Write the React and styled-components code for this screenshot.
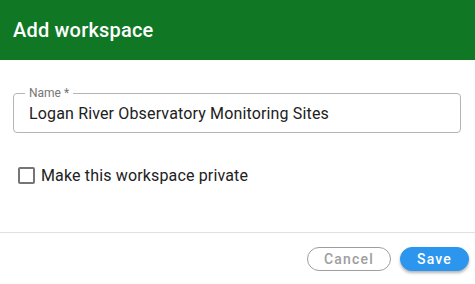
import React from 'react';
import styled, { createGlobalStyle } from 'styled-components';

const GlobalStyle = createGlobalStyle`
	body {
		margin: 0;
		background: #fff;
		font-family: Roboto, 'Liberation Sans', sans-serif;
	}
`;

const App = () => {
	return (
		<>
			<GlobalStyle />
			<Dialog>
				<Header>Add workspace</Header>
				<Body>
					<Field>
						<Legend>Name *</Legend>
						<Value>Logan River Observatory Monitoring Sites</Value>
					</Field>
					<CheckRow>
						<Box />
						Make this workspace private
					</CheckRow>
				</Body>
				<Footer>
					<Button>Cancel</Button>
					<Button primary>Save</Button>
				</Footer>
			</Dialog>
		</>
	);
};

export default App;

const Dialog = styled.div`
	width: 475px;
	height: 284px;
	display: flex;
	flex-direction: column;
	background: #fff;
`;

const Header = styled.div`
	height: 60px;
	box-sizing: border-box;
	padding: 0 13px;
	display: flex;
	align-items: center;
	background: #107725;
	color: #fff;
	font-size: 20px;
	font-weight: 500;
	letter-spacing: 0.2px;
`;

const Body = styled.div`
	padding: 33px 14px 0 13px;
	height: 173px;
	box-sizing: border-box;
	border-bottom: 1px solid #e0e0e0;
`;

const Field = styled.div`
	position: relative;
	height: 40px;
	box-sizing: border-box;
	border: 1px solid #b5b5b5;
	border-radius: 4px;
	padding: 0 15px;
	display: flex;
	align-items: center;
`;

const Legend = styled.span`
	position: absolute;
	top: -8px;
	left: 11px;
	padding: 0 4px;
	background: #fff;
	font-size: 12px;
	line-height: 14px;
	color: #757575;
`;

const Value = styled.span`
	font-size: 16px;
	color: #212121;
	letter-spacing: 0.15px;
	padding-top: 1px;
`;

const CheckRow = styled.label`
	display: flex;
	align-items: center;
	gap: 6px;
	margin-top: 33px;
	padding-left: 5px;
	font-size: 16px;
	color: #212121;
	letter-spacing: 0.15px;
`;

const Box = styled.span`
	width: 17px;
	height: 17px;
	box-sizing: border-box;
	border: 2px solid #757575;
	border-radius: 2px;
`;

const Footer = styled.div`
	display: flex;
	justify-content: flex-end;
	align-items: center;
	gap: 9px;
	padding: 14px 6px 0 0;
`;

const Button = styled.button`
	height: 24px;
	width: ${(p) => (p.primary ? '69px' : '84px')};
	border-radius: 12px;
	border: 1px solid ${(p) => (p.primary ? '#2c96ee' : '#9e9e9e')};
	background: ${(p) => (p.primary ? '#2c96ee' : '#fff')};
	color: ${(p) => (p.primary ? '#fff' : '#9e9e9e')};
	box-shadow: ${(p) => (p.primary ? '0 2px 3px rgba(0,0,0,0.3)' : 'none')};
	font-family: Roboto, 'Liberation Sans', sans-serif;
	font-size: 14px;
	font-weight: 500;
	letter-spacing: 1.2px;
	padding: 0;
`;
